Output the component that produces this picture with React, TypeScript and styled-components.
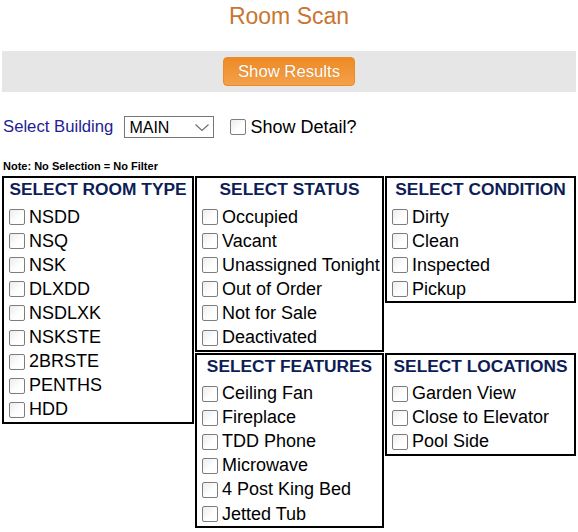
import React from "react";
import styled, { createGlobalStyle } from "styled-components";

const GlobalStyle = createGlobalStyle`
  body {
    margin: 0;
    background: #fff;
    font-family: "Liberation Sans", Arial, sans-serif;
    color: #000;
  }
`;

const Page = styled.div`
  padding: 0 2px;
  width: 574px;
`;

const Title = styled.h1`
  margin: 0 0 23px;
  padding-top: 4px;
  height: 24px;
  line-height: 24px;
  font-size: 23px;
  font-weight: normal;
  text-align: center;
  color: #ca7532;
`;

const ActionBar = styled.div`
  height: 41px;
  background: #e6e6e6;
  display: flex;
  align-items: center;
  justify-content: center;
`;

const ShowButton = styled.button`
  width: 132px;
  height: 29px;
  border: 1px solid #eb8a2a;
  border-radius: 4px;
  background: linear-gradient(#ee8a25, #f3a14b);
  color: #fff;
  font-family: "Liberation Sans", Arial, sans-serif;
  font-size: 16.7px;
  padding: 0;
  text-shadow: 0 0 1px rgba(150, 70, 0, 0.4);
`;

const FilterRow = styled.div`
  display: flex;
  align-items: center;
  height: 22px;
  margin-top: 24px;
  padding-left: 1px;
`;

const BuildingLabel = styled.span`
  font-size: 16.7px;
  color: #231d93;
  margin-right: 11px;
`;

const SelectWrap = styled.div`
  position: relative;
  width: 90px;
  height: 22px;
  margin-right: 16px;
`;

const Select = styled.select`
  appearance: none;
  width: 100%;
  height: 100%;
  border: 1px solid #767676;
  border-radius: 0;
  background: #fff;
  font-family: "Liberation Sans", Arial, sans-serif;
  font-size: 16px;
  padding: 0 0 0 4px;
  color: #000;
`;

const Chevron = styled.svg`
  position: absolute;
  right: 5px;
  top: 8px;
  pointer-events: none;
`;

const Check = styled.input.attrs({ type: "checkbox" })`
  appearance: none;
  flex: none;
  width: 16px;
  height: 16px;
  margin: 0;
  border: 1px solid #7d7d7d;
  border-radius: 2px;
  background: linear-gradient(135deg, #ececec, #fff 60%);
`;

const DetailLabel = styled.label`
  display: flex;
  align-items: center;
  gap: 4px;
  font-size: 18px;
`;

const Note = styled.div`
  margin: 22px 0 3px 1px;
  font-size: 11px;
  line-height: 13px;
  font-weight: bold;
`;

const Grid = styled.div`
  display: grid;
  grid-template-columns: 192px 189px 191px;
  grid-template-rows: auto auto;
  column-gap: 1px;
  row-gap: 1px;
  align-items: start;
`;

const Box = styled.div<{ $col: number; $row: string }>`
  grid-column: ${p => p.$col};
  grid-row: ${p => p.$row};
  border: 2px solid #000;
  padding: 0 0 0 5px;
`;

const Heading = styled.div`
  padding-top: 1px;
  margin: 0 0 6px -5px;
  line-height: 20px;
  font-size: 17.33px;
  font-weight: bold;
  text-align: center;
  color: #0d1d56;
  white-space: nowrap;
`;

const Item = styled.label`
  display: flex;
  align-items: center;
  gap: 4px;
  height: 24.1px;
  font-size: 18px;
  white-space: nowrap;
`;

interface GroupProps {
  title: string;
  items: string[];
  col: number;
  row: string;
}

const Group = ({ title, items, col, row }: GroupProps) => (
  <Box $col={col} $row={row}>
    <Heading>{title}</Heading>
    {items.map(item => (
      <Item key={item}>
        <Check />
        {item}
      </Item>
    ))}
  </Box>
);

const roomTypes = ["NSDD", "NSQ", "NSK", "DLXDD", "NSDLXK", "NSKSTE", "2BRSTE", "PENTHS", "HDD"];
const statuses = ["Occupied", "Vacant", "Unassigned Tonight", "Out of Order", "Not for Sale", "Deactivated"];
const conditions = ["Dirty", "Clean", "Inspected", "Pickup"];
const features = ["Ceiling Fan", "Fireplace", "TDD Phone", "Microwave", "4 Post King Bed", "Jetted Tub"];
const locations = ["Garden View", "Close to Elevator", "Pool Side"];

export default function App() {
  return (
    <Page>
      <GlobalStyle />
      <Title>Room Scan</Title>
      <ActionBar>
        <ShowButton>Show Results</ShowButton>
      </ActionBar>
      <FilterRow>
        <BuildingLabel>Select Building</BuildingLabel>
        <SelectWrap>
          <Select defaultValue="MAIN">
            <option>MAIN</option>
          </Select>
          <Chevron width="14" height="7" viewBox="0 0 14 7">
            <path d="M0.5 0.5 L7 6.5 L13.5 0.5" fill="none" stroke="#6d6d6d" strokeWidth="1.1" />
          </Chevron>
        </SelectWrap>
        <DetailLabel>
          <Check />
          Show Detail?
        </DetailLabel>
      </FilterRow>
      <Note>Note: No Selection = No Filter</Note>
      <Grid>
        <Group title="SELECT ROOM TYPE" items={roomTypes} col={1} row="1 / 3" />
        <Group title="SELECT STATUS" items={statuses} col={2} row="1" />
        <Group title="SELECT CONDITION" items={conditions} col={3} row="1" />
        <Group title="SELECT FEATURES" items={features} col={2} row="2" />
        <Group title="SELECT LOCATIONS" items={locations} col={3} row="2" />
      </Grid>
    </Page>
  );
}
